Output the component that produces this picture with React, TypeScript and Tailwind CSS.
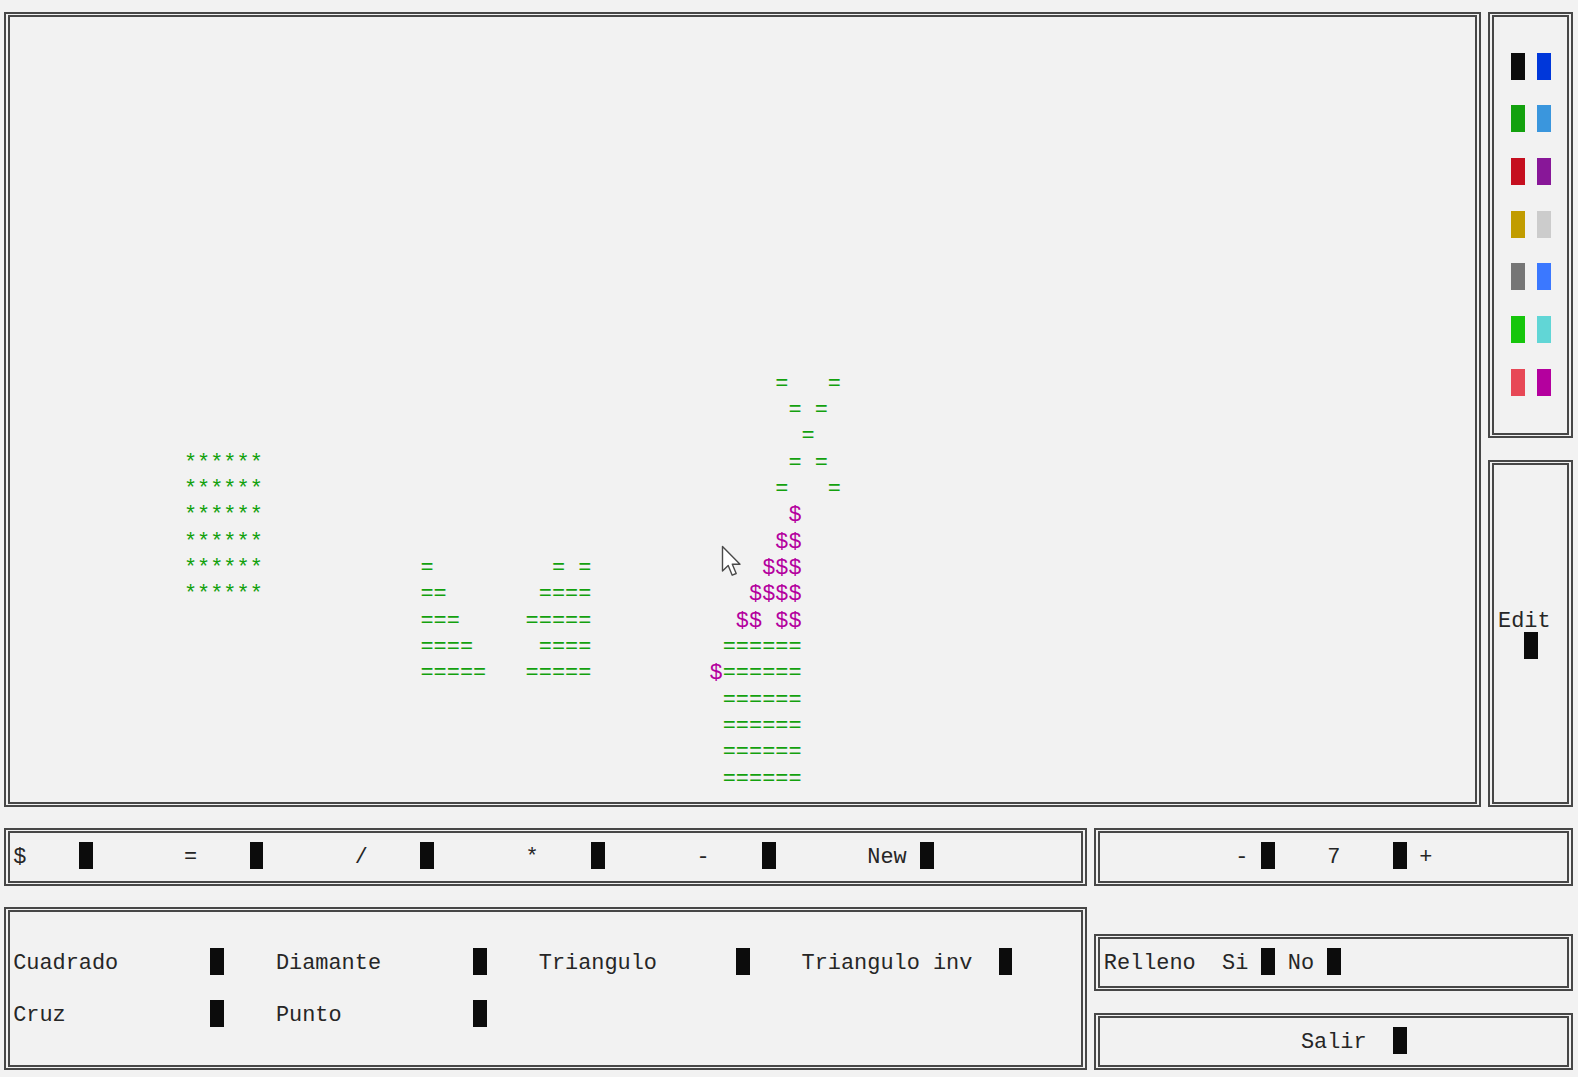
import React from 'react';

type Seg = { r: number; c: number; t?: string; cls?: string; b?: string };

const G = 'text-[#13a10e]';
const M = 'text-[#b4009e]';
const K = 'bg-[#0c0c0c]';

function Segs({ segs, r0, c0 }: { segs: Seg[]; r0: number; c0: number }) {
  return (
    <div className="grid grid-cols-[repeat(120,13.15px)] auto-rows-[26.33px]">
      {segs.map((s, i) => {
        const len = s.t ? s.t.length : 1;
        const style = { gridRow: s.r - r0, gridColumn: `${s.c - c0} / span ${len}` };
        if (s.b) {
          return <span key={i} style={style} className={`${s.b} block h-[27px] w-[13.7px]`} />;
        }
        return (
          <span
            key={i}
            style={style}
            className={`relative top-[3px] whitespace-pre text-[21.9px] leading-[26.33px] ${s.cls ?? ''}`}
          >
            {s.t}
          </span>
        );
      })}
    </div>
  );
}

function Panel({
  area,
  r0,
  c0,
  segs,
  children,
}: {
  area: string;
  r0: number;
  c0: number;
  segs: Seg[];
  children?: React.ReactNode;
}) {
  return (
    <div
      className={`${area} relative overflow-hidden ml-[3.575px] mr-[3.575px] mt-[12.2px] mb-[9.2px] border-double border-x-[6px] border-y-[5px] border-[#474747] pl-[3.575px] pt-[9.13px]`}
    >
      <Segs segs={segs} r0={r0} c0={c0} />
      {children}
    </div>
  );
}

const canvasSegs: Seg[] = [
  ...[17, 18, 19, 20, 21, 22].map((r) => ({ r, c: 14, t: '******', cls: G })),
  { r: 14, c: 59, t: '=   =', cls: G },
  { r: 15, c: 60, t: '= =', cls: G },
  { r: 16, c: 61, t: '=', cls: G },
  { r: 17, c: 60, t: '= =', cls: G },
  { r: 18, c: 59, t: '=   =', cls: G },
  { r: 19, c: 60, t: '$', cls: M },
  { r: 20, c: 59, t: '$$', cls: M },
  { r: 21, c: 58, t: '$$$', cls: M },
  { r: 22, c: 57, t: '$$$$', cls: M },
  { r: 23, c: 56, t: '$$ $$', cls: M },
  { r: 21, c: 32, t: '=', cls: G },
  { r: 22, c: 32, t: '==', cls: G },
  { r: 23, c: 32, t: '===', cls: G },
  { r: 24, c: 32, t: '====', cls: G },
  { r: 25, c: 32, t: '=====', cls: G },
  { r: 21, c: 42, t: '= =', cls: G },
  { r: 22, c: 41, t: '====', cls: G },
  { r: 23, c: 40, t: '=====', cls: G },
  { r: 24, c: 41, t: '====', cls: G },
  { r: 25, c: 40, t: '=====', cls: G },
  { r: 25, c: 54, t: '$', cls: M },
  ...[24, 25, 26, 27, 28, 29].map((r) => ({ r, c: 55, t: '======', cls: G })),
];

const paletteColors: [string, string][] = [
  ['bg-[#0c0c0c]', 'bg-[#0037da]'],
  ['bg-[#13a10e]', 'bg-[#3a96dd]'],
  ['bg-[#c50f1f]', 'bg-[#881798]'],
  ['bg-[#c19c00]', 'bg-[#cccccc]'],
  ['bg-[#767676]', 'bg-[#3b78ff]'],
  ['bg-[#16c60c]', 'bg-[#61d6d6]'],
  ['bg-[#e74856]', 'bg-[#b4009e]'],
];

const paletteSegs: Seg[] = paletteColors.flatMap(([a, b], i) => [
  { r: 2 + i * 2, c: 115, b: a },
  { r: 2 + i * 2, c: 117, b: b },
]);

const editSegs: Seg[] = [
  { r: 23, c: 114, t: 'Edit' },
  { r: 24, c: 116, b: K },
];

const toolSegs: Seg[] = [
  { r: 32, c: 1, t: '$' },
  { r: 32, c: 6, b: K },
  { r: 32, c: 14, t: '=' },
  { r: 32, c: 19, b: K },
  { r: 32, c: 27, t: '/' },
  { r: 32, c: 32, b: K },
  { r: 32, c: 40, t: '*' },
  { r: 32, c: 45, b: K },
  { r: 32, c: 53, t: '-' },
  { r: 32, c: 58, b: K },
  { r: 32, c: 66, t: 'New' },
  { r: 32, c: 70, b: K },
];

const sizeSegs: Seg[] = [
  { r: 32, c: 94, t: '-' },
  { r: 32, c: 96, b: K },
  { r: 32, c: 101, t: '7' },
  { r: 32, c: 106, b: K },
  { r: 32, c: 108, t: '+' },
];

const shapeSegs: Seg[] = [
  { r: 36, c: 1, t: 'Cuadrado' },
  { r: 36, c: 16, b: K },
  { r: 36, c: 21, t: 'Diamante' },
  { r: 36, c: 36, b: K },
  { r: 36, c: 41, t: 'Triangulo' },
  { r: 36, c: 56, b: K },
  { r: 36, c: 61, t: 'Triangulo inv' },
  { r: 36, c: 76, b: K },
  { r: 38, c: 1, t: 'Cruz' },
  { r: 38, c: 16, b: K },
  { r: 38, c: 21, t: 'Punto' },
  { r: 38, c: 36, b: K },
];

const rellenoSegs: Seg[] = [
  { r: 36, c: 84, t: 'Relleno' },
  { r: 36, c: 93, t: 'Si' },
  { r: 36, c: 96, b: K },
  { r: 36, c: 98, t: 'No' },
  { r: 36, c: 101, b: K },
];

const salirSegs: Seg[] = [
  { r: 39, c: 99, t: 'Salir' },
  { r: 39, c: 106, b: K },
];

function Cursor() {
  return (
    <svg
      className="absolute left-[711px] top-[528px]"
      width="22"
      height="34"
      viewBox="0 0 22 34"
    >
      <path
        d="M1.5 1.5 L1.5 26 L7.2 20.6 L11.2 30.2 L15.2 28.5 L11.3 19.2 L19 19.2 Z"
        fill="#ffffff"
        stroke="#4a4a4a"
        strokeWidth="1.4"
        strokeLinejoin="round"
      />
    </svg>
  );
}

export default function App() {
  return (
    <div className="w-[1578px] h-[1077px] overflow-hidden bg-[#f2f2f2] text-[#262626] font-['Liberation_Mono',monospace]">
      <div className="grid grid-cols-[repeat(120,13.15px)] grid-rows-[repeat(41,26.33px)]">
        <Panel area="col-start-1 col-end-[114] row-start-1 row-end-[32]" r0={0} c0={0} segs={canvasSegs}>
          <Cursor />
        </Panel>
        <Panel area="col-start-[114] col-end-[121] row-start-1 row-end-[18]" r0={0} c0={113} segs={paletteSegs} />
        <Panel area="col-start-[114] col-end-[121] row-start-[18] row-end-[32]" r0={17} c0={113} segs={editSegs} />
        <Panel area="col-start-1 col-end-[84] row-start-[32] row-end-[35]" r0={31} c0={0} segs={toolSegs} />
        <Panel area="col-start-[84] col-end-[121] row-start-[32] row-end-[35]" r0={31} c0={83} segs={sizeSegs} />
        <Panel area="col-start-1 col-end-[84] row-start-[35] row-end-[42]" r0={34} c0={0} segs={shapeSegs} />
        <Panel area="col-start-[84] col-end-[121] row-start-[36] row-end-[39]" r0={35} c0={83} segs={rellenoSegs} />
        <Panel area="col-start-[84] col-end-[121] row-start-[39] row-end-[42]" r0={38} c0={83} segs={salirSegs} />
      </div>
    </div>
  );
}
